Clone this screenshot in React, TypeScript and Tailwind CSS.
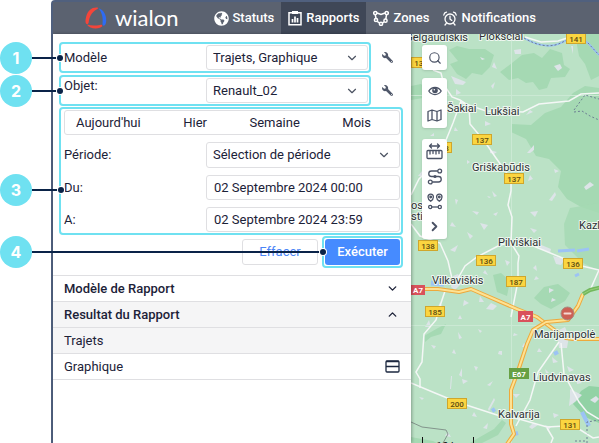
import React from 'react';
import clsx from 'clsx';
import { ChevronDown, ChevronUp, ChevronRight, Search } from 'lucide-react';
import { FaWrench, FaGlobeAmericas } from 'react-icons/fa';

const towns = [
  { name: 'Plokščiai', x: 479, y: 40 },
  { name: 'Šakiai', x: 447, y: 112 },
  { name: 'Lukšiai', x: 485, y: 115 },
  { name: 'Griškabūdis', x: 472, y: 171 },
  { name: 'Pilviškiai', x: 498, y: 246 },
  { name: 'Kazlų Rūda', x: 579, y: 229 },
  { name: 'Vilkaviškis', x: 432, y: 284 },
  { name: 'Marijampolė', x: 534, y: 338 },
  { name: 'Liudvinavas', x: 533, y: 381 },
  { name: 'Kalvarija', x: 498, y: 418 },
  { name: 'os', x: 411, y: 209 },
  { name: 'sti', x: 411, y: 220 },
];

const roadSigns = [
  { label: '141', x: 566, y: 33 },
  { label: '137', x: 411, y: 57 },
  { label: '137', x: 472, y: 134 },
  { label: '138', x: 432, y: 142 },
  { label: '137', x: 504, y: 173 },
  { label: '138', x: 418, y: 240 },
  { label: '136', x: 476, y: 255 },
  { label: '136', x: 563, y: 258 },
  { label: '187', x: 506, y: 276 },
  { label: '185', x: 425, y: 306 },
  { label: '200', x: 447, y: 398 },
  { label: '131', x: 560, y: 419 },
];

// small built-up patches scattered over the countryside
const patches = [
  'M451 76l15 6-3 3-8-1z', 'M491 86l4-4-2 7z', 'M554 66l6-2 2 4-4 3z', 'M571 46l2 0 0 8z', 'M514 50l7-1 0 5-6 0z',
  'M480 57l5 2-3 1z', 'M530 110l3 2-7 3z', 'M494 62l3 7-5-2z', 'M485 121l6 3-6 2z', 'M456 89l5 4-5 2z', 'M455 127l3 4-4 0z',
  'M430 136l4-3 0 3z', 'M467 160l3 2-3 2z', 'M490 150l7 2-3 2-4-1z', 'M527 153l7-8 0 5-4 3z', 'M530 175l3 4-5 2z', 'M554 169l5 2-4 2z',
  'M584 187l6-5 4 3-8 5z', 'M549 200l6-8 1 3-4 6z', 'M455 199l3 1-2 5z', 'M487 196l4 1-2 1z', 'M492 191l5 5-3 1z', 'M472 211l7 1-2 3z',
  'M493 214l5-2-2 4z', 'M530 212l8-1-3 6z', 'M530 228l7 2-3 3z', 'M450 250l8-5-3 7z', 'M452 222l4 5-6-1z', 'M467 232l6 4-3 3z', 'M480 223l8 2-4 5z',
  'M539 244l12 5-1 4-10-4z', 'M553 256l12 3-4 6-5-1z', 'M533 268l3-3 1 6z', 'M549 288l5 2-5 3z', 'M536 276l3 3-5 1z', 'M552 298l4 2-5 2z', 'M453 276l5-2 5 8-8 8-4-3z',
  'M491 303l6 3-4 4-7-1z', 'M505 260l5 2-3 4z', 'M485 270l3 5-5-2z', 'M464 300l5 3-6 3z', 'M480 296l4 6-5 0z', 'M440 302l3 6-5-1z', 'M460 315l2 4-4 0z',
  'M425 327l4-7 2 7z', 'M478 329l4 2-2 2z', 'M458 332l4 6-3 1z', 'M431 345l5 1-2 3z', 'M452 353l2-4 2 5z', 'M474 366l4 1-2 4z', 'M462 368l-3 7 3 2z', 'M462 379l6 2-5 3z',
  'M499 351l3 0 0 4-4-1z', 'M487 385l6-4-3 5z', 'M451 376l1 0-1 13-1 0z', 'M419 397l5 1-2 2z', 'M474 412l3 5-5-1z', 'M494 398l1 2-6 11-1-2z', 'M483 428l5-5-1 6z',
  'M539 348l3 4-5 0z', 'M552 357l6 5-5 1z', 'M545 369l4 4-3 0z', 'M567 366l7 4-5 2z', 'M576 378l6 5-5 1z', 'M570 389l12 6-7 7-6 4 1-9z', 'M553 413l6 2-5 3z', 'M513 394l7 0-4 4z',
  'M529 427l4-4 5 2-6 4z', 'M545 425l6 2-3 4z', 'M590 400l6-4 3 3-4 4z', 'M448 432l3 5-6-1z', 'M418 176l4-5 0 5z', 'M514 333l4 2-5 1z', 'M524 343l3 4-5 0z',
];

const periods = ["Aujourd'hui", 'Hier', 'Semaine', 'Mois'];

function RegionMap() {
  return (
    <svg
      viewBox="411 34 188 409"
      preserveAspectRatio="xMinYMin slice"
      className="absolute inset-0 h-full w-full"
      fontFamily="Roboto, sans-serif"
    >
      <rect x="411" y="34" width="900" height="900" fill="#bbe2c6" />

      <g fill="#a5d9b3">
        <path d="M449 50l8-4 12 3 16 0 9 6-4 12-8 8-10-2-6 6-9-5-7-10 8-3z" />
        <path d="M411 86l10-2 6 6-4 8-12 2z" />
        <path d="M500 72l12-9 10-8 12-2 8 5 8-9 12 4 2 12 6 4-5 8-14 1-4 10-8 2-6-8-7 1-8-5-9 2z" />
        <path d="M575 34h24v42l-8 4-6-16-6-8z" />
        <path d="M511 124l20 1 14-12 16-6 12-14 12-7 14 2v125l-18-6-14-8-9-12 3-16-12-12-13-3-10-17-15-7z" />
        <path d="M564 224l6-16 29-5v68l-16-8-18-18z" opacity="0.8" />
        <path d="M534 298l10-11 14-3 12 9-5 8-14 8-10-5z" />
        <path d="M493 275l8-2 9 8-3 15-10-4z" />
        <path d="M573 404l8-13 8-5 10 1v36l-14-6z" fill="#92d2a5" />
        <path d="M480 437l14-8 8-9 4 3-8 12-16 8-12 0z" />
        <path d="M411 437l22 4 4 2h-26z" />
        <path d="M424 336l14-8 8-4-5 10-10 3-6 5z" />
      </g>
      <g fill="#dde4e8">
        {patches.map((d) => (
          <path key={d} d={d} />
        ))}
        <path d="M557 331l8-4 4 9-2 12-8 0z" />
      </g>
      <g stroke="#cbe9d4" strokeWidth="1" fill="none">
        <path d="M511.500 34V443M411 95.500H599M411 325.500H599" />
      </g>

      <g fill="none" stroke="#9cc3f5" strokeWidth="3">
        <path d="M558 251l17-1M577 251l12-2M575 276l4-2" />
        <path d="M431 283l13 1" strokeWidth="5" />
        <path d="M554 354l4-2M514 434l4-1M492 411l3-2M582 412l7 14" strokeWidth="4" />
        <path d="M524 38c12 7 22 9 31 7 8-2 12-6 17-7 6 0 10 0 16 5l11 12" strokeWidth="2" />
      </g>
      <g fill="none" stroke="#6c7f93" strokeWidth="1" strokeDasharray="2 2">
        <path d="M524 38c12 7 22 9 31 7 8-2 12-6 17-7 6 0 10 0 16 5l11 12" />
        <path d="M574 110l11-15 14 4M574 112l8-1 8 5 9 4M587 443V422l12-2M575 441h12" />
      </g>
      <path d="M411 422l11 5 24 3 2 4-5 9" fill="none" stroke="#83958c" />

      <g fill="none" stroke="#f4f7f6" strokeWidth="1.5">
        <path d="M433 70l8 3 3 12 8 12 8 3 9 6 1 18 15 18 11 16 15 21 0 12-3 14 4 12-1 26 8 13-1 7 0 18-7 36" />
        <path d="M525 37l16 5 17-1 12-4" />
        <path d="M460 102l26 9 37 1 16-8 30-3 12-7 18-1" />
        <path d="M461 101l-8 22-9 22" />
        <path d="M411 195l8-16 6-6" />
        <path d="M411 224l9 12 20 7 8 18 5 22 4-3 8-14 12-9 21-11 13-4 20 3 29 12 22 9 17 4 11 2" />
        <path d="M599 270l-8 18-8 7" />
        <path d="M446 288l-6 18-4 14-12 14-2 28-6 10 4 7 0 9" />
        <path d="M411 383l24 10 22 9 40 13 22 4 28 8 18-1 14 3 14 9 6-1" />
        <path d="M559 342l-21 30-8 28-14 26M561 343l3 31 15 28 8 10 12 7" />
        <path d="M547 428l6 10-2 5" />
      </g>
      <g fill="none" strokeLinejoin="round">
        <path d="M411 289h27l21 3 12-3 46 20 20 8 20 15 9 6 7 1h26" stroke="#eda93c" strokeWidth="4" />
        <path d="M411 289h27l21 3 12-3 46 20 20 8 20 15 9 6 7 1h26" stroke="#fde293" strokeWidth="2" />
        <path d="M583 294l-5 12-10 14-22 2-13 8-6 14-10 30-6 16 0 34 3 10-13 19" stroke="#eda93c" strokeWidth="4" />
        <path d="M583 294l-5 12-10 14-22 2-13 8-6 14-10 30-6 16 0 34 3 10-13 19" stroke="#fde293" strokeWidth="2" />
        <path d="M583 294l7-4 12-3" stroke="#72b85c" strokeWidth="4" />
        <path d="M583 294l7-4 12-3" stroke="#98cf7d" strokeWidth="1" />
      </g>

      <g fontSize="8" fontWeight="500" textAnchor="middle">
        {roadSigns.map((sign) => (
          <g key={`${sign.x}-${sign.y}`}>
            <rect x={sign.x + 0.5} y={sign.y + 0.5} width="19" height="10" fill="#fbd540" stroke="#cfa62c" />
            <text x={sign.x + 10} y={sign.y + 8.5} fill="#5c4b12">{sign.label}</text>
          </g>
        ))}
        <g fill="#fff" fontWeight="700">
          <rect x="409" y="285" width="16" height="10" fill="#d9515b" />
          <text x="418" y="293">A7</text>
          <rect x="518" y="311" width="15" height="11" fill="#d9515b" />
          <text x="525.500" y="319.500">A7</text>
          <rect x="509" y="368" width="20" height="11" fill="#67a044" />
          <text x="519" y="376.500">E67</text>
        </g>
      </g>

      <circle cx="567.500" cy="313.500" r="6.500" fill="#cd6155" stroke="#a98a80" />
      <rect x="563.500" y="312.500" width="8" height="2" rx="1" fill="#f6d9d4" />

      <g
        fontSize="11"
        fill="#2c3033"
        stroke="#eef7f0"
        strokeWidth="2"
        strokeLinejoin="round"
        paintOrder="stroke"
      >
        <text x="468" y="41" textAnchor="end">Gelgaudiškis</text>
        {towns.map((town) => (
          <text key={town.name} x={town.x} y={town.y}>{town.name}</text>
        ))}
      </g>

      <path d="M422.500 437v8M473.500 437v8" stroke="#111" />
      <text x="436" y="450" fontSize="11" fill="#111">10 km</text>
    </svg>
  );
}

function WialonLogo() {
  return (
    <a href="#" className="flex items-center gap-2 text-white" aria-label="wialon">
      <svg width="22" height="22" viewBox="0 0 22 22">
        <path d="M12.500.500C6.500 0 2.800 3.500 1.200 9.500.300 13 .200 15.800 1.200 16.800c1 .8 2.200 0 2.500-1.600C4.300 10.500 6 5.500 12 2.200c1-.5 1.500-1.500.5-1.700z" fill="#f4453a" />
        <path d="M13.500 1.200c4.500 1.500 7 5.300 7.600 10 .4 3.300-.2 6.300-1.600 7.300-1.300.6-2.300-.5-2-2.300.7-5.500-.3-10.200-4-15z" fill="#2f6bf2" />
        <path d="M1.800 17.600c2 2.800 5.500 4 9 3.900 3-.1 5.700-1 6.400-2.200.5-1.200-.6-1.700-2.200-1.400-4.500.9-8.700.9-13.200-.3z" fill="#f4453a" />
      </svg>
      <span className="font-[Lato,sans-serif] text-[22px] leading-6">wialon</span>
    </a>
  );
}

function ReportIcon() {
  return (
    <svg width="14" height="16" viewBox="0 0 14 16" fill="none" stroke="currentColor" strokeWidth="1.500">
      <path d="M4 2.700H1v12h12v-12h-3" />
      <path d="M4 1h6v3H4z" fill="currentColor" stroke="none" />
      <path d="M4.500 12.500V9M7 12.500V6.500M9.500 12.500V8" strokeWidth="1.700" />
    </svg>
  );
}

function ZonesIcon() {
  return (
    <svg width="16" height="16" viewBox="0 0 16 16" fill="none" stroke="currentColor" strokeWidth="1.500">
      <path d="M4 3l4 1.500L12 3M13.500 4.800l-.7 4.400M11 11.800l-1.500 1M6.500 13l-2.300-1.600M3 8.500L2.300 4.800" />
      <circle cx="2.300" cy="3" r="1.600" />
      <circle cx="13.700" cy="3" r="1.600" />
      <circle cx="3" cy="10" r="1.600" />
      <circle cx="12.500" cy="10.700" r="1.600" />
      <circle cx="8" cy="13.800" r="1.600" />
    </svg>
  );
}

function AlarmIcon() {
  return (
    <svg width="14" height="15" viewBox="0 0 14 15" fill="none" stroke="currentColor" strokeWidth="1.300" strokeLinecap="round">
      <circle cx="7" cy="8" r="5" />
      <path d="M7 5.200V8l1.800 1.400M3.300 12.300L2 14M10.700 12.300L12 14M.800 4C1 2.500 2 1.500 3.500 1.200M13.200 4c-.2-1.500-1.200-2.500-2.700-2.800" />
    </svg>
  );
}

function EyeIcon() {
  return (
    <svg width="14" height="10" viewBox="0 0 14 10" fill="none" stroke="currentColor" strokeWidth="1.300">
      <path d="M.800 5C3.800.300 10.200.300 13.200 5 10.200 9.700 3.800 9.700.800 5z" />
      <circle cx="7" cy="4.500" r="2.800" fill="currentColor" stroke="none" />
      <circle cx="6.300" cy="3.800" r=".8" fill="#fff" stroke="none" />
    </svg>
  );
}

function MapIcon() {
  return (
    <svg width="15" height="13" viewBox="0 0 15 13" fill="none" stroke="currentColor" strokeWidth="1.300" strokeLinejoin="round">
      <path d="M1 2.500L5 1l5 1.500L14 1v9.500L10 12l-5-1.500L1 12zM5 1v9.500M10 2.500V12" />
    </svg>
  );
}

function RulerIcon() {
  return (
    <svg width="17" height="17" viewBox="0 0 17 17" fill="none" stroke="currentColor" strokeWidth="1.300" strokeLinecap="round" strokeLinejoin="round">
      <path d="M3.500 3h10M5.500 1L3.500 3l2 2M11.500 1l2 2-2 2" />
      <rect x="1" y="7.500" width="15" height="8" rx="1" />
      <path d="M4 8v3M7 8v2.500M10 8v3M13 8v2.500" />
    </svg>
  );
}

function RouteIcon() {
  return (
    <svg width="16" height="17" viewBox="0 0 16 17" fill="none" stroke="currentColor" strokeWidth="1.300">
      <circle cx="12.700" cy="3" r="1.900" />
      <circle cx="3.300" cy="14" r="1.900" />
      <path d="M10.800 3H4.500a2.750 2.750 0 0 0 0 5.500h7a2.750 2.750 0 0 1 0 5.500H5.200" />
      <circle cx="8" cy="8.500" r="1.600" fill="currentColor" stroke="none" />
    </svg>
  );
}

function PinsIcon() {
  return (
    <svg width="16" height="17" viewBox="0 0 16 17" fill="none" stroke="currentColor" strokeWidth="1.300">
      <path d="M3.700 8.200C1.800 6.900 1 5.500 1 4a2.700 2.900 0 0 1 5.400 0c0 1.500-.8 2.900-2.700 4.200zM12.300 8.200C10.400 6.900 9.600 5.500 9.600 4a2.700 2.900 0 0 1 5.400 0c0 1.500-.8 2.900-2.700 4.200z" />
      <circle cx="3.700" cy="4" r=".8" />
      <circle cx="12.300" cy="4" r=".8" />
      <circle cx="3.200" cy="14" r="1.600" />
      <circle cx="12.800" cy="14" r="1.600" />
      <path d="M4.800 14h6.400" />
    </svg>
  );
}

function SplitIcon() {
  return (
    <svg width="15" height="13" viewBox="0 0 15 13" fill="none" stroke="#1c2840" strokeWidth="1.300">
      <rect x="1" y="1" width="13" height="11" rx="1" />
      <path d="M1 1.500h13M1 6.500h13" />
    </svg>
  );
}

interface CalloutProps {
  step: number;
  className: string;
}

function Callout({ step, className }: CalloutProps) {
  return (
    <div className={clsx('pointer-events-none absolute flex -translate-y-1/2 items-center', className)}>
      <span className="flex size-8 shrink-0 items-center justify-center rounded-full bg-[#6fe1f1] font-[Inter,sans-serif] text-base leading-4 font-bold text-white">
        {step}
      </span>
      <span className="h-[2px] flex-1 bg-[#0a2348]" />
      <span className="size-[6px] shrink-0 rounded-full bg-[#0a2348] ring-1 ring-white" />
    </div>
  );
}

interface SelectFieldProps {
  id: string;
  value: string;
  className?: string;
}

function SelectField({ id, value, className }: SelectFieldProps) {
  return (
    <div className={clsx('relative flex-1', className)}>
      <select
        id={id}
        defaultValue={value}
        className="block h-full w-full appearance-none rounded-[3px] border border-[#dfdfe2] bg-white pr-8 pl-[6px]"
      >
        <option>{value}</option>
      </select>
      <ChevronDown size={14} className="pointer-events-none absolute top-1/2 right-[9px] -translate-y-1/2 text-[#4c5362]" />
    </div>
  );
}

interface DateFieldProps {
  id: string;
  label: string;
  value: string;
}

function DateField({ id, label, value }: DateFieldProps) {
  return (
    <div className="flex items-center">
      <label htmlFor={id} className="w-[142px]">{label}</label>
      <input
        id={id}
        type="text"
        defaultValue={value}
        className="h-[25px] min-w-0 flex-1 rounded-[3px] border border-[#dfdfe2] bg-white px-[7px]"
      />
    </div>
  );
}

const highlight = 'relative rounded-[4px] border-2 border-[#6fe1f1] p-px';
const tab = 'flex items-center gap-1 px-[7px]';
const tool = 'flex h-[25px] w-[25px] items-center justify-center';
const toolGroup = 'flex flex-col rounded-[3px] bg-white shadow-sm';

export default function App() {
  return (
    <div className="min-h-screen bg-white pl-[51px] font-[Roboto,sans-serif] text-[13px] leading-4 text-[#1c2238]">
      <div className="flex min-h-screen flex-col rounded-tl-[4px] border-t-2 border-l-2 border-[#50607e]">
        <header className="flex h-8 items-stretch bg-[#5b6270] pl-8 whitespace-nowrap">
          <WialonLogo />
          <nav className="ml-auto flex pr-[56px] font-medium text-white">
            <a href="#" className={tab}>
              <FaGlobeAmericas size={15} />
              Statuts
            </a>
            <a href="#" className={clsx(tab, 'bg-[#3f4757]')}>
              <ReportIcon />
              Rapports
            </a>
            <a href="#" className={tab}>
              <ZonesIcon />
              Zones
            </a>
            <a href="#" className={tab}>
              <AlarmIcon />
              Notifications
            </a>
          </nav>
        </header>

        <main className="flex flex-1">
          <section className="z-10 w-[358px] shrink-0 bg-white pt-2 shadow-[1px_0_3px_rgba(0,0,0,0.3)]">
            <form className="pr-2 pl-[6px]" onSubmit={(e) => e.preventDefault()}>
              <div className="flex items-center">
                <div className={clsx(highlight, 'flex flex-1 items-center')}>
                  <label htmlFor="template" className="w-[144px] pl-[2px]">Modèle</label>
                  <SelectField id="template" value="Trajets, Graphique" className="h-[25px]" />
                  <Callout step={1} className="top-1/2 left-[-61px] w-[63px]" />
                </div>
                <button type="button" aria-label="Options" className="flex w-8 justify-center text-[#50586a]">
                  <FaWrench size={11} className="-scale-x-100" />
                </button>
              </div>

              <div className="mt-[2px] flex items-center">
                <div className={clsx(highlight, 'flex flex-1 items-center')}>
                  <label htmlFor="unit" className="w-[144px] self-start pl-[2px]">Objet:</label>
                  <SelectField id="unit" value="Renault_02" className="h-[25px]" />
                  <Callout step={2} className="top-1/2 left-[-61px] w-[63px]" />
                </div>
                <button type="button" aria-label="Options" className="flex w-8 justify-center text-[#50586a]">
                  <FaWrench size={11} className="-scale-x-100" />
                </button>
              </div>

              <div className={clsx(highlight, 'mt-px flex flex-col gap-[7px] pl-[3px]')}>
                <div className="flex h-[25px] items-center justify-between rounded-[3px] border border-[#dfdfe2] pr-7 pl-[11px]">
                  {periods.map((period) => (
                    <button key={period} type="button">{period}</button>
                  ))}
                </div>
                <div className="flex items-center">
                  <label htmlFor="period" className="w-[142px]">Période:</label>
                  <SelectField id="period" value="Sélection de période" className="h-[26px]" />
                </div>
                <DateField id="from" label="Du:" value="02 Septembre 2024 00:00" />
                <DateField id="to" label="A:" value="02 Septembre 2024 23:59" />
                <Callout step={3} className="top-[81px] left-[-61px] w-[64px]" />
              </div>

              <div className="mt-px flex items-center justify-end gap-1">
                <button type="button" className="h-[26px] w-[76px] rounded-[3px] border border-[#dfdfe2] text-[#4a86f7]">
                  Effacer
                </button>
                <div className={highlight}>
                  <button type="submit" className="block h-[26px] w-[75px] rounded-[3px] bg-[#468bff] font-medium text-white">
                    Exécuter
                  </button>
                  <Callout step={4} className="top-1/2 left-[-324px] w-[326px]" />
                </div>
              </div>
            </form>

            <div className="mt-[7px] border-t border-[#dfdfe2]">
              <button type="button" className="flex h-[26px] w-full items-center justify-between border-b border-[#dfdfe2] pr-3 pl-[11px] font-medium">
                Modèle de Rapport
                <ChevronDown size={13} strokeWidth={2.5} />
              </button>
              <button type="button" className="flex h-[26px] w-full items-center justify-between border-b border-[#dfdfe2] bg-[#f5f5f6] pr-3 pl-[11px] font-medium">
                Resultat du Rapport
                <ChevronUp size={13} strokeWidth={2.5} />
              </button>
              <div className="flex h-[26px] items-center border-b border-[#dfdfe2] bg-[#f5f5f6] px-[11px]">Trajets</div>
              <div className="flex h-[26px] items-center justify-between border-b border-[#dfdfe2] px-[11px]">
                Graphique
                <SplitIcon />
              </div>
            </div>
          </section>

          <section className="relative flex-1 overflow-hidden">
            <RegionMap />
            <div className="absolute top-[11px] left-[11px] flex flex-col text-[#4a5265]">
              <div className={toolGroup}>
                <button type="button" aria-label="Rechercher" className={tool}><Search size={14} strokeWidth={2} /></button>
              </div>
              <div className={clsx(toolGroup, 'mt-2')}>
                <button type="button" aria-label="Visibilité" className={tool}><EyeIcon /></button>
                <button type="button" aria-label="Carte" className={tool}><MapIcon /></button>
              </div>
              <div className={clsx(toolGroup, 'mt-[11px]')}>
                <button type="button" aria-label="Distance" className={tool}><RulerIcon /></button>
                <button type="button" aria-label="Itinéraire" className={tool}><RouteIcon /></button>
                <button type="button" aria-label="Adresses" className={tool}><PinsIcon /></button>
                <button type="button" aria-label="Suivant" className={tool}><ChevronRight size={15} strokeWidth={3} /></button>
              </div>
            </div>
          </section>
        </main>
      </div>
    </div>
  );
}
